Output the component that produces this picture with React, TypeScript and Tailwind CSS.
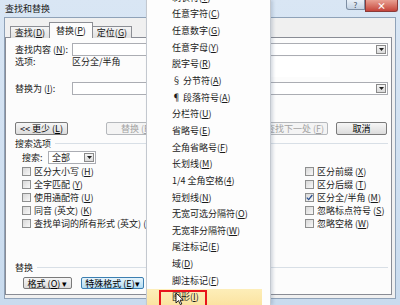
import React from 'react';

const K = ({ c }: { c: string }) => <span className="underline underline-offset-[1px]">{c}</span>;

const Btn = ({
  children,
  w,
  disabled,
  pressed,
  className = '',
}: {
  children: React.ReactNode;
  w: string;
  disabled?: boolean;
  pressed?: boolean;
  className?: string;
}) => (
  <div
    className={`${w} h-full flex items-center justify-center rounded-[2px] border leading-none ${
      disabled
        ? 'border-[#b5b8bc] bg-[#f4f4f4] text-[#a3a3a3]'
        : pressed
        ? 'border-[#3c7fb1] bg-gradient-to-b from-[#e5f4fc] to-[#b3dcf3] text-black'
        : 'border-[#7a7a7a] bg-gradient-to-b from-[#f6f6f6] to-[#dcdcdc] text-black'
    } ${className}`}
  >
    {children}
  </div>
);

const Check = ({ checked }: { checked?: boolean }) => (
  <div className="w-[9px] h-[9px] border border-[#8e8f8f] bg-gradient-to-br from-[#d8d8d8] to-[#f8f8f8] flex items-center justify-center">
    {checked && (
      <svg width="7" height="7" viewBox="0 0 7 7">
        <path d="M0.8 3.6 L2.7 5.6 L6.3 1" stroke="#2a4f8f" strokeWidth="1.3" fill="none" />
      </svg>
    )}
  </div>
);

const Arrow = () => (
  <div className="w-[10px] h-[9px] border border-[#8a8a8a] bg-gradient-to-b from-[#f4f4f4] to-[#dadada] flex items-center justify-center">
    <svg width="5" height="3" viewBox="0 0 5 3">
      <path d="M0 0 H5 L2.5 3 Z" fill="#222" />
    </svg>
  </div>
);

const leftChecks: [string, string, boolean][] = [
  ['区分大小写', 'H', false],
  ['全字匹配', 'Y', false],
  ['使用通配符', 'U', false],
  ['同音 (英文)', 'K', false],
  ['查找单词的所有形式 (英文)', 'W', false],
];

const rightChecks: [string, string, boolean][] = [
  ['区分前缀', 'X', false],
  ['区分后缀', 'T', false],
  ['区分全/半角', 'M', true],
  ['忽略标点符号', 'S', false],
  ['忽略空格', 'W', false],
];

const menuItems: [string, string][] = [
  ['制表符', 'T'],
  ['任意字符', 'C'],
  ['任意数字', 'G'],
  ['任意字母', 'Y'],
  ['脱字号', 'R'],
  ['§ 分节符', 'A'],
  ['¶ 段落符号', 'A'],
  ['分栏符', 'U'],
  ['省略号', 'E'],
  ['全角省略号', 'F'],
  ['长划线', 'M'],
  ['1/4 全角空格', '4'],
  ['短划线', 'N'],
  ['无宽可选分隔符', 'O'],
  ['无宽非分隔符', 'W'],
  ['尾注标记', 'E'],
  ['域', 'D'],
  ['脚注标记', 'F'],
  ['图形', 'I'],
];

const App: React.FC = () => {
  return (
    <div className="w-[400px] h-[305px] relative overflow-hidden bg-gradient-to-b from-[#d9e6f4] to-[#c9dbee] text-[9px] text-[#1a1a1a] font-['Noto_Sans_CJK_SC',sans-serif] leading-none">
      {/* Title bar */}
      <div className="h-[17px] flex items-start justify-between pl-[5px] pr-[2px]">
        <span className="mt-[4px] text-[9px] text-[#1b1b1b]">查找和替换</span>
        <div className="flex items-start">
          <div className="w-[19px] h-[10px] border border-[#7d8ea3] border-t-0 rounded-bl-[3px] bg-gradient-to-b from-[#e9f0f8] to-[#c4d3e4] flex items-center justify-center text-[8px] text-[#404a58]">
            ?
          </div>
          <div className="w-[33px] h-[12px] border border-[#8b3a38] border-t-0 rounded-br-[3px] bg-gradient-to-b from-[#e8a093] to-[#c4433a] flex items-center justify-center text-[9px] font-bold text-white">
            ×
          </div>
        </div>
      </div>

      {/* Dialog body */}
      <div className="mx-[4px] h-[282px] bg-[#f0f0f0] border border-[#8fa2b8]">
        {/* Tabs */}
        <div className="mt-[4px] -mb-px pl-[5px] h-[16px] flex items-end relative z-10">
          <div className="w-[40px] h-[12px] border border-b-0 border-[#8c8e94] bg-gradient-to-b from-[#f5f5f5] to-[#e0e0e0] flex items-center justify-center">
            查找(<K c="D" />)
          </div>
          <div className="w-[44px] h-[16px] -ml-px border border-b-0 border-[#8c8e94] bg-[#fcfcfc] flex items-center justify-center">
            替换(<K c="P" />)
          </div>
          <div className="w-[40px] h-[12px] -ml-px border border-b-0 border-[#8c8e94] bg-gradient-to-b from-[#f5f5f5] to-[#e0e0e0] flex items-center justify-center">
            定位(<K c="G" />)
          </div>
        </div>

        {/* Panel */}
        <div className="mr-[3px] h-[258px] border border-[#898c95] bg-[#fcfcfc]">
          <div className="mt-[5px] h-[13px] flex items-center">
            <span className="ml-[9px] w-[57px]">
              查找内容 (<K c="N" />):
            </span>
            <div className="w-[316px] h-full border border-[#abadb3] bg-white flex items-center justify-end pr-[1px]">
              <Arrow />
            </div>
          </div>
          <div className="h-[10px] flex items-center">
            <span className="ml-[9px] w-[57px]">选项:</span>
            <span>区分全/半角</span>
          </div>
          <div className="mt-[16px] h-[13px] flex items-center">
            <span className="ml-[9px] w-[57px]">
              替换为 (<K c="I" />):
            </span>
            <div className="w-[316px] h-full border border-[#abadb3] bg-white flex items-center justify-end pr-[1px]">
              <Arrow />
            </div>
          </div>

          <div className="mt-[27px] h-[13px] flex">
            <Btn w="w-[53px]" className="ml-[9px]">
              &lt;&lt; 更少 (<K c="L" />)
            </Btn>
            <Btn w="w-[53px]" disabled className="ml-[38px] justify-start pl-[14px]">
              替换 (<K c="R" />)
            </Btn>
            <Btn w="w-[66px]" disabled className="ml-[103px]">
              查找下一处 (<K c="F" />)
            </Btn>
            <Btn w="w-[51px]" className="ml-[8px]">
              取消
            </Btn>
          </div>

          <div className="mt-[3px] h-[10px] flex items-center ml-[9px] mr-[3px]">
            <span>搜索选项</span>
            <div className="flex-1 h-px bg-[#d8dfe6] ml-[4px]" />
          </div>

          <div className="mt-[3px] h-[13px] flex items-center pl-[16px]">
            <span className="w-[26px]">搜索:</span>
            <div className="w-[48px] h-full border border-[#abadb3] bg-white flex items-center justify-between pl-[3px] pr-[1px]">
              <span>全部</span>
              <Arrow />
            </div>
          </div>

          <div className="mt-[1px] grid grid-cols-[283px_1fr] pl-[16px]">
            <div className="flex flex-col">
              {leftChecks.map(([t, k, c]) => (
                <div key={t} className="h-[13px] flex items-center gap-[3px]">
                  <Check checked={c} />
                  <span>
                    {t} (<K c={k} />)
                  </span>
                </div>
              ))}
            </div>
            <div className="flex flex-col">
              {rightChecks.map(([t, k, c]) => (
                <div key={t} className="h-[13px] flex items-center gap-[3px]">
                  <Check checked={c} />
                  <span>
                    {t} (<K c={k} />)
                  </span>
                </div>
              ))}
            </div>
          </div>

          <div className="mt-[32px] h-[10px] flex items-center ml-[9px] mr-[3px]">
            <span>替换</span>
            <div className="flex-1 h-px bg-[#d8dfe6] ml-[4px]" />
          </div>

          <div className="mt-[5px] h-[12px] flex pl-[17px]">
            <Btn w="w-[49px]">
              格式 (<K c="O" />) ▾
            </Btn>
            <Btn w="w-[63px]" pressed className="ml-[9px]">
              特殊格式 (<K c="E" />)▾
            </Btn>
          </div>
        </div>
      </div>

      {/* stray white patch */}
      <div className="absolute left-[270px] top-[57px] w-[60px] h-[20px] bg-white" />

      {/* Special format dropdown menu */}
      <div className="absolute left-[146px] top-0 w-[125px] h-[305px] bg-[#fdfdfd] border-l border-r border-[#c3c8cf] shadow-[2px_0_3px_rgba(90,110,140,0.25)] overflow-hidden">
        <div className="-mt-[11px]">
          {menuItems.map(([t, k], i) => {
            const last = i === menuItems.length - 1;
            return (
              <div
                key={t + i}
                className={`h-[16.65px] flex items-center pl-[25px] ${
                  last ? 'bg-gradient-to-b from-[#fdeeb9] to-[#fbe3a1] mr-[8px]' : ''
                }`}
              >
                {t}(<K c={k} />)
              </div>
            );
          })}
        </div>
        <div className="absolute left-[12px] top-[290px] w-[48px] h-[18px] border-2 border-[#e8141b]" />
        <svg className="absolute left-[28px] top-[292px]" width="10" height="14" viewBox="0 0 10 14">
          <path d="M1 1 L1 11 L3.5 8.6 L5.3 12.6 L6.8 12 L5.1 8.1 L8.4 8.1 Z" fill="white" stroke="#111" strokeWidth="0.9" />
        </svg>
      </div>
    </div>
  );
};

export default App;
